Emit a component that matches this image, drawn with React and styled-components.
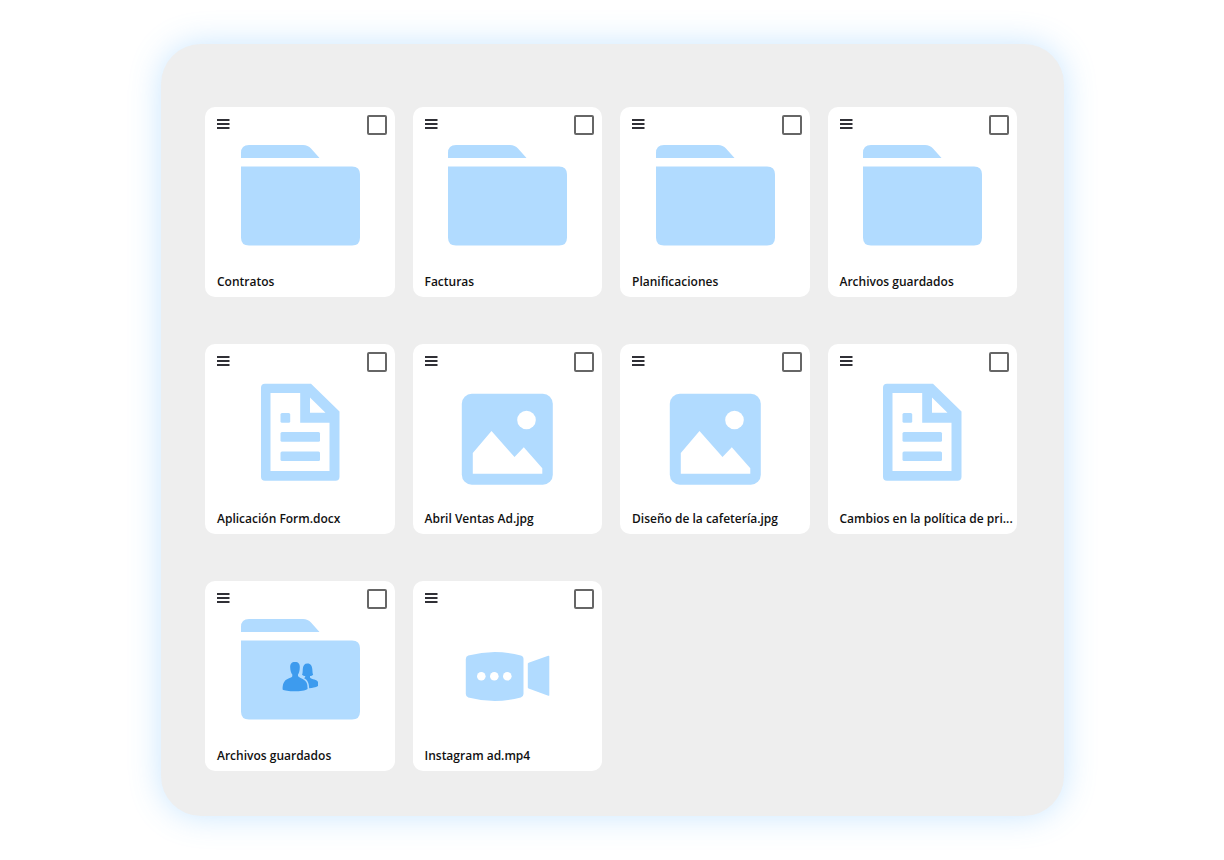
import React from "react";
import styled, { createGlobalStyle } from "styled-components";

const GlobalStyle = createGlobalStyle`
  *, *::before, *::after { box-sizing: border-box; }
  body {
    margin: 0;
    background: #ffffff;
    color: #111111;
    font-family: "Open Sans", "Noto Sans", sans-serif;
  }
`;

const Page = styled.main`
  padding: 44px 160px 44px 161px;
`;

const Panel = styled.section`
  padding: 63px 47px 45px 44px;
  border-radius: 40px;
  background: #eeeeee;
  box-shadow: 0 0 32px rgba(77, 171, 255, 0.3);
`;

const FileGrid = styled.ul`
  display: grid;
  grid-template-columns: repeat(4, minmax(0, 1fr));
  gap: 47px 18px;
  margin: 0;
  padding: 0;
  list-style: none;
`;

const Card = styled.li`
  display: flex;
  flex-direction: column;
  min-height: 190px;
  border-radius: 10px;
  background: #ffffff;
`;

const CardHeader = styled.div`
  display: flex;
  align-items: flex-start;
  justify-content: space-between;
  height: 38px;
  padding: 8px 8px 0 12px;
`;

const MenuButton = styled.button`
  display: flex;
  padding: 4px 0;
  border: 0;
  background: none;
  color: #303036;
  cursor: pointer;
`;

const Tick = styled.input`
  appearance: none;
  width: 20px;
  height: 20px;
  margin: 0;
  border: 2px solid #666666;
  border-radius: 2px;
  background: #ffffff;
  cursor: pointer;

  &:checked {
    background: #3d9bee;
  }
`;

const Art = styled.svg`
  align-self: center;
  width: 120px;
  height: 104px;
  fill: #b1dbff;
`;

const Name = styled.label`
  padding: 24px 4px 0 12px;
  overflow: hidden;
  font-size: 12px;
  font-weight: 600;
  line-height: 18px;
  white-space: nowrap;
`;

const FolderShape = () => (
  <>
    <path d="M0 13V8Q0 0 8 0H62Q67 0 70 3.500L78.500 13Z" />
    <path d="M0 21.500H111Q119 21.500 119 29.500V92.500Q119 100.500 111 100.500H8Q0 100.500 0 92.500Z" />
  </>
);

const PeopleShape = () => (
  <g fill="#3d9bee">
    <path d="M54 43C57.500 43 59 45 58.800 48.500C58.700 52 57.800 54.500 57 55.500V57C58 59.500 65.500 59.500 66.300 66L66.600 70C63 73 45 73 41.600 70.500C41.500 65 43 61.500 47 59.800C49.500 58.800 51 58.500 51.300 57.300V55.500C50 54 49.300 51 49.200 48.500C49 45 50.500 43 54 43Z" />
    <path d="M66.400 44.500C70 44.500 71 47 71.300 50C71.500 53 71.600 55 72.200 55.800C71.300 56.700 70.200 57 69 57.100V58.500C70.500 60.500 76.500 60.500 77 63V67C74.500 68.500 71.500 69 68.200 69.200C68 64 66.300 60.500 63 59.300C64 58.800 64.300 58 64.200 57.100C63 57 62 56.700 61 55.800C61.700 54.500 61.700 52 61.800 50C62 46.500 63.500 44.500 66.400 44.500Z" />
  </g>
);

const DocumentShape = () => (
  <>
    <path
      fillRule="evenodd"
      d="M24 1.700H70L98.500 29.500V94.700Q98.500 98.700 94.500 98.700H24Q20 98.700 20 94.700V5.700Q20 1.700 24 1.700ZM29.500 11V89H88.500V40.700H59.200V11ZM69 15.500V30.700H84.500Z"
    />
    <rect x="39.500" y="31" width="9.700" height="9.700" rx="1.500" />
    <rect x="39.500" y="50" width="39.500" height="9.700" rx="1.500" />
    <rect x="39.500" y="69.400" width="39.500" height="9.700" rx="1.500" />
  </>
);

const ImageShape = () => (
  <>
    <rect x="13.800" y="11.700" width="91" height="91" rx="10" />
    <g fill="#ffffff">
      <circle cx="78.500" cy="38" r="9.300" />
      <path d="M24.800 91.700V71L43.500 49L66.500 75L75.800 65.300L94.300 86.300V91.700Z" />
    </g>
  </>
);

const VideoShape = () => (
  <>
    <path d="M17.800 40Q17.800 37.200 20.300 36.600Q46.800 29.600 72.800 36.600Q75.500 37.200 75.500 40V75Q75.500 77.700 72.800 78.400Q46.800 85.400 20.300 78.400Q17.800 77.700 17.800 75Z" />
    <path d="M79.800 44.700Q79.800 44 80.600 43.700L100.300 36.700Q101.300 36.500 101.300 37.500V75.900Q101.300 77 100.300 76.700L80.600 69.500Q79.800 69.200 79.800 68.500Z" />
    <g fill="#ffffff">
      <circle cx="33.300" cy="57.300" r="4.300" />
      <circle cx="46.300" cy="57.300" r="4.300" />
      <circle cx="59.300" cy="57.300" r="4.300" />
    </g>
  </>
);

const SharedFolderShape = () => (
  <>
    <FolderShape />
    <PeopleShape />
  </>
);

const shapes = {
  folder: FolderShape,
  shared: SharedFolderShape,
  document: DocumentShape,
  image: ImageShape,
  video: VideoShape,
};

const files = [
  { name: "Contratos", kind: "folder" },
  { name: "Facturas", kind: "folder" },
  { name: "Planificaciones", kind: "folder" },
  { name: "Archivos guardados", kind: "folder" },
  { name: "Aplicación Form.docx", kind: "document" },
  { name: "Abril Ventas Ad.jpg", kind: "image" },
  { name: "Diseño de la cafetería.jpg", kind: "image" },
  { name: "Cambios en la política de pri...", kind: "document" },
  { name: "Archivos guardados", kind: "shared" },
  { name: "Instagram ad.mp4", kind: "video" },
];

function FileCard({ id, name, kind }) {
  const Shape = shapes[kind];
  return (
    <Card>
      <CardHeader>
        <MenuButton type="button" aria-label="Menú">
          <svg width="13" height="10" fill="currentColor" aria-hidden="true">
            <path d="M0 0H12.500V2H0ZM0 4H12.500V6H0ZM0 8H12.500V10H0Z" />
          </svg>
        </MenuButton>
        <Tick type="checkbox" id={id} />
      </CardHeader>
      <Art viewBox="-1 0 120 104" aria-hidden="true">
        <Shape />
      </Art>
      <Name htmlFor={id}>{name}</Name>
    </Card>
  );
}

export default function App() {
  return (
    <>
      <GlobalStyle />
      <Page>
        <Panel>
          <FileGrid>
            {files.map((file, index) => (
              <FileCard key={index} id={`file-${index}`} {...file} />
            ))}
          </FileGrid>
        </Panel>
      </Page>
    </>
  );
}
